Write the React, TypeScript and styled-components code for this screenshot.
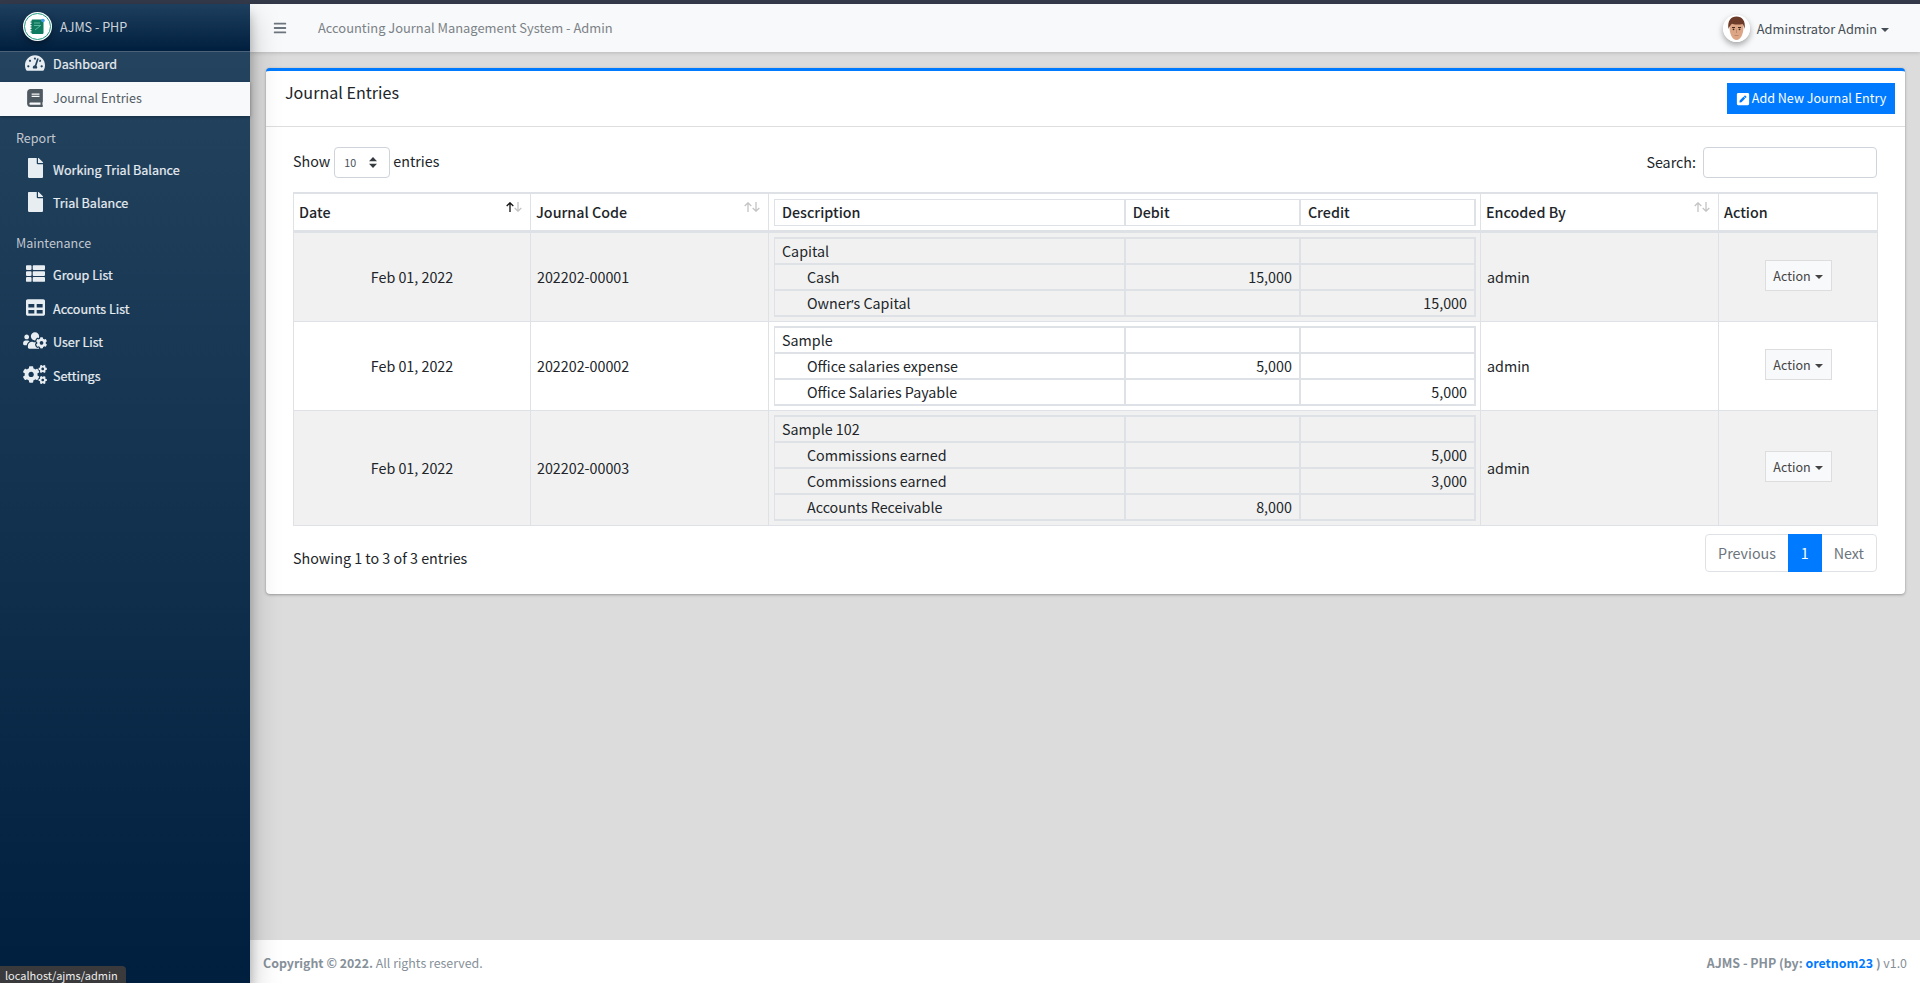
import React from "react";
import styled, { createGlobalStyle } from "styled-components";
import { FaTachometerAlt, FaBook, FaFile, FaThList, FaTable, FaUsersCog, FaCogs, FaBars, FaPenSquare } from "react-icons/fa";

const Global = createGlobalStyle`
  html, body { margin: 0; padding: 0; height: 100%; overflow: hidden; }
  body { font-family: "Noto Sans CJK SC", "Noto Sans", sans-serif; font-size: 14.3px; color: #212529; background: #dcdcdc; }
  * { box-sizing: border-box; }
`;

const Page = styled.div`
  height: 983px; display: flex; flex-direction: column; position: relative; background: #dcdcdc;
`;
const TopStrip = styled.div`height: 4px; background: #343a4a; flex: none;`;
const Body = styled.div`flex: 1; display: flex; min-height: 0;`;

const Sidebar = styled.aside`
  width: 250px; flex: none; display: flex; flex-direction: column; position: relative; z-index: 3;
  background: linear-gradient(180deg, #254560 0%, #001f3f 100%);
  box-shadow: 0 14px 28px rgba(0,0,0,.25), 0 10px 10px rgba(0,0,0,.22);
`;
const Brand = styled.div`
  height: 48px; display: flex; align-items: center; gap: 8px; padding: 0 0 2px 23px;
  background: linear-gradient(180deg, #1f3f5e 0%, #001f3f 100%);
  border-bottom: 1px solid #4b6278; color: rgba(255,255,255,.8); font-size: 12.6px;
`;
const LogoWrap = styled.div`
  width: 29px; height: 29px; border-radius: 50%; flex: none;
  box-shadow: 0 3px 6px rgba(0,0,0,.35);
  svg { display: block; }
`;
const Nav = styled.nav`display: flex; flex-direction: column;`;
const NavItem = styled.div<{ $active?: boolean; $h?: number; $pb?: number }>`
  height: ${p => p.$h ?? 33.5}px; display: flex; align-items: center; padding: 0 0 ${p => p.$pb ?? 0}px 20px; font-size: 12.55px;
  color: ${p => (p.$active ? "#4f5962" : "#e8edf2")};
  background: ${p => (p.$active ? "#f8f9fa" : "transparent")};
  box-shadow: ${p => (p.$active ? "0 1px 3px rgba(0,0,0,.3)" : "none")};
  -webkit-text-stroke: ${p => (p.$active ? "0" : ".2px")};
`;
const NavIcon = styled.span<{ $w: number; $h: number; $up?: number }>`
  width: 30px; margin-right: 3px; display: flex; justify-content: center; flex: none;
  position: relative; top: ${p => -(p.$up ?? 0)}px;
  -webkit-text-stroke: 0;
  svg { width: ${p => p.$w}px; height: ${p => p.$h}px; display: block; }
`;
const NavHeader = styled.div<{ $h: number; $top: number }>`
  height: ${p => p.$h}px; padding: ${p => p.$top}px 0 0 16px; display: flex; align-items: center;
  font-size: 12.55px; color: #c2c7d0;
`;

const Main = styled.div`flex: 1; min-width: 0; display: flex; flex-direction: column;`;
const Navbar = styled.header`
  height: 48px; flex: none; background: #f8f9fa; display: flex; align-items: center;
  padding: 0 31px 0 23px; box-shadow: 0 1px 4px rgba(0,0,0,.16); position: relative; z-index: 2;
`;
const Burger = styled.span`
  color: #6c757d; display: flex; width: 14px; margin-right: 31px;
  svg { width: 14px; height: 14px; display: block; }
`;
const NavTitle = styled.span`font-size: 12.9px; color: #7b8288; flex: 1; padding-bottom: 2px;`;
const UserBox = styled.div`display: flex; align-items: center; gap: 7px; font-size: 12.8px; color: #454d55;`;
const Avatar = styled.div`
  width: 27px; height: 27px; border-radius: 50%; overflow: hidden; background: #fff;
  box-shadow: 0 3px 6px rgba(0,0,0,.35); position: relative;
  svg { display: block; }
`;
const Caret = styled.i`
  display: inline-block; width: 0; height: 0; margin-left: 4px; vertical-align: 2px;
  border-top: 4.5px solid currentColor; border-left: 4.5px solid transparent; border-right: 4.5px solid transparent;
`;

const Content = styled.main`flex: 1; padding: 16px 15px 0 12px; min-height: 0; margin-left: 4px;`;
const Card = styled.section`
  background: #fff; border-top: 3px solid #007bff; border-radius: 4px;
  box-shadow: 0 0 1px rgba(0,0,0,.125), 0 1px 3px rgba(0,0,0,.3);
`;
const CardHead = styled.div`
  height: 56px; display: flex; justify-content: space-between; align-items: flex-start;
  padding: 0 10px 0 19px; border-bottom: 1px solid #dedede;
`;
const CardTitle = styled.h3`margin: 8px 0 0; font-size: 16.1px; font-weight: 400; line-height: 27px; color: #212529;`;
const AddBtn = styled.button`
  width: 168px; height: 31px; margin: 12px 0 0; background: #007bff; color: #fff; border: 0; border-radius: 0;
  font: inherit; font-size: 12.55px; display: flex; align-items: center; justify-content: center; gap: 2px; padding: 0 0 2px;
  svg { width: 14px; height: 14px; display: block; position: relative; top: 1px; }
`;
const CardBody = styled.div`padding: 20px 28px 22px 27px;`;
const Controls = styled.div`display: flex; justify-content: space-between; align-items: center; height: 31px; margin-bottom: 14px;`;
const ShowBox = styled.label`display: flex; align-items: center; gap: 3px; position: relative; top: -2px;`;
const FakeSelect = styled.span`
  width: 56px; height: 31px; margin-left: 1px; border: 1px solid #ced4da; border-radius: 4px; display: flex; align-items: center;
  justify-content: space-between; padding: 0 12px 0 9px; font-size: 10.7px; color: #495057; background: #fff; position: relative; top: 2px;
`;
const SearchBox = styled.label`display: flex; align-items: center; gap: 7px;`;
const SearchLabel = styled.span`position: relative; top: -1px;`;
const SearchInput = styled.input`
  width: 174px; height: 31px; border: 1px solid #ced4da; border-radius: 4px; background: #fff; padding: 0 8px; outline: none;
`;

const Table = styled.table`
  width: 100%; table-layout: fixed; border-collapse: collapse;
  border: 1px solid #dee2e6;
`;
const Col = styled.col<{ $w: number }>`width: ${p => p.$w}px;`;
const Thead = styled.thead`border-top: 2px solid #dee2e6;`;
const Th = styled.th`
  padding: 0 5px 2px; text-align: left; font-weight: 500; position: relative;
  border-left: 1px solid #dee2e6; border-right: 1px solid #dee2e6; border-bottom: 3px solid #dee2e6;
`;
const ThBox = styled.th`
  padding: 5px 4px 4px 5px; border-left: 1px solid #dee2e6; border-right: 1px solid #dee2e6; border-bottom: 3px solid #dee2e6;
  text-align: left;
`;
const SortGlyphs = styled.span`
  position: absolute; right: 8px; top: 8px; display: flex;
  svg { display: block; }
`;
const Tr = styled.tr<{ $alt?: boolean }>`background: ${p => (p.$alt ? "#f1f1f1" : "#fff")};`;
const Td = styled.td<{ $center?: boolean; $h?: number }>`
  ${p => (p.$h ? `height: ${p.$h}px;` : "")}
  padding: 0 6px 1px; border: 1px solid #dee2e6; vertical-align: middle; text-align: ${p => (p.$center ? "center" : "left")};
`;
const DescTd = styled.td<{ $h: number }>`
  height: ${p => p.$h}px; padding: 4px 4px 4px 5px; border: 1px solid #dee2e6; vertical-align: top;
`;
const Inner = styled.table`
  width: 100%; table-layout: fixed; border-collapse: collapse;
`;
const InnerHeadCell = styled.td`
  height: 26px; padding: 0 7px; border: 1px solid #dee2e6; border-width: 1px 2px 1px 1px; font-weight: 500; line-height: 1;
`;
const InnerCell = styled.td<{ $indent?: boolean; $right?: boolean }>`
  height: 26px; padding: 0 7px 0 ${p => (p.$indent ? 32 : 7)}px; border: 1px solid #dee2e6; border-width: 2px 2px 2px 1px;
  text-align: ${p => (p.$right ? "right" : "left")}; line-height: 1;
`;
const Apos = styled.span`font-family: "Noto Sans", sans-serif; font-size: 13px;`;
const ActionBtn = styled.button`
  width: 67px; height: 31px; background: #f8f9fa; border: 1px solid #ddd; color: #444; font: inherit; font-size: 12.55px; padding: 0;
  position: relative; top: -1px;
`;
const Foot = styled.div`display: flex; justify-content: space-between; align-items: flex-start; margin-top: 8px;`;
const Info = styled.div`padding-top: 12px; line-height: 24px;`;
const Pager = styled.div`
  display: flex; height: 38px; border: 1px solid #dee2e6; border-radius: 4px; overflow: visible; width: 172px;
`;
const PageLink = styled.span<{ $active?: boolean; $w: number }>`
  width: ${p => p.$w}px; margin: -1px 0; padding-bottom: 2px; display: flex; align-items: center; justify-content: center;
  color: ${p => (p.$active ? "#fff" : "#6c757d")}; background: ${p => (p.$active ? "#007bff" : "transparent")};
`;

const Footer = styled.footer`
  height: 43px; flex: none; background: #fff; display: flex; justify-content: space-between; align-items: center;
  padding: 2px 13px 0 13px; font-size: 12.4px; color: #869099;
`;
const FootBold = styled.b`font-weight: 700;`;
const FootLink = styled.b`color: #007bff; font-weight: 700;`;
const StatusTip = styled.div`
  position: absolute; left: 0; bottom: 0; height: 17px; width: 126px; background: #3a3a3c; color: #eee; font-size: 11px;
  line-height: 19px; padding-left: 5px; border-top-right-radius: 4px; z-index: 5; white-space: nowrap;
`;

const Logo = () => (
  <svg width="29" height="29" viewBox="0 0 29 29">
    <circle cx="14.5" cy="14.5" r="14.5" fill="#fff" />
    <circle cx="14.5" cy="14.5" r="13" fill="none" stroke="#1f9b82" strokeWidth="1" />
    <rect x="8.5" y="7.5" width="12" height="14.5" rx="1.2" fill="#0f7a60" />
    <path d="M7.5 10h2M7.5 12.5h2M7.5 15h2M7.5 17.5h2M7.5 20h2" stroke="#0f7a60" strokeWidth="1" />
    <path d="M11 11h6M11 13.5h7M12 18l5-4" stroke="#6fc7ac" strokeWidth=".8" />
    <circle cx="20" cy="8.5" r="1.8" fill="#3f9bea" />
  </svg>
);

const Face = () => (
  <svg width="27" height="27" viewBox="0 0 27 27">
    <rect width="27" height="27" fill="#fff" />
    <path d="M6.500 12c0 7 3 13 7 13s7-6 7-13V8h-14z" fill="#dca585" />
    <path d="M5.500 14C4 6 8 1.500 13.500 1.500S23 6 21.500 14c-.4-2.500-1-4-2-5-3 .8-7 .8-10.500-.3C7.500 10 6 12 5.500 14z" fill="#6b3a28" />
    <path d="M9 12.500h3M15 12.500h3" stroke="#4a2a1c" strokeWidth="1" />
    <circle cx="10.500" cy="14.300" r=".9" fill="#3b2a22" />
    <circle cx="16.500" cy="14.300" r=".9" fill="#3b2a22" />
    <path d="M13.500 14.500v3.500M11.500 20.500h4" stroke="#b57f63" strokeWidth=".8" fill="none" />
  </svg>
);

const SelectArrows = () => (
  <svg width="8" height="11" viewBox="0 0 8 11"><path d="M4 0 8 4.200H0zM4 11 0 6.800h8z" fill="#343a40" /></svg>
);

const Sort = ({ on }: { on?: boolean }) => (
  <SortGlyphs>
    <svg width="8" height="10" viewBox="0 0 8 10" fill="none" stroke={on ? "#111" : "#c4c4c4"} strokeWidth="1.3">
      <path d="M4 10V1M.7 4 4 .8 7.300 4" />
    </svg>
    <svg width="8" height="10" viewBox="0 0 8 10" fill="none" stroke="#c4c4c4" strokeWidth="1.3">
      <path d="M4 0v9M.7 6 4 9.200 7.300 6" />
    </svg>
  </SortGlyphs>
);

type Line = { name: React.ReactNode; indent?: boolean; debit?: string; credit?: string };
type Entry = { code: string; lines: Line[] };
const entries: Entry[] = [
  { code: "202202-00001", lines: [
    { name: "Capital" },
    { name: "Cash", indent: true, debit: "15,000" },
    { name: <>Owner<Apos>’</Apos>s Capital</>, indent: true, credit: "15,000" },
  ] },
  { code: "202202-00002", lines: [
    { name: "Sample" },
    { name: "Office salaries expense", indent: true, debit: "5,000" },
    { name: "Office Salaries Payable", indent: true, credit: "5,000" },
  ] },
  { code: "202202-00003", lines: [
    { name: "Sample 102" },
    { name: "Commissions earned", indent: true, credit: "5,000" },
    { name: "Commissions earned", indent: true, credit: "3,000" },
    { name: "Accounts Receivable", indent: true, debit: "8,000" },
  ] },
];

const InnerCols = () => (
  <colgroup>
    <Col $w={350} />
    <Col $w={175} />
    <Col $w={175} />
  </colgroup>
);

export default function App() {
  return (
    <Page>
      <Global />
      <TopStrip />
      <Body>
        <Sidebar>
          <Brand>
            <LogoWrap><Logo /></LogoWrap>
            AJMS - PHP
          </Brand>
          <Nav>
            <NavItem $h={30} $pb={8}><NavIcon $w={20} $h={18} $up={0}><FaTachometerAlt /></NavIcon>Dashboard</NavItem>
            <NavItem $active $h={34} $pb={3}><NavIcon $w={16} $h={18} $up={0}><FaBook /></NavIcon>Journal Entries</NavItem>
            <NavHeader $h={37} $top={5}>Report</NavHeader>
            <NavItem><NavIcon $w={15} $h={20} $up={2}><FaFile /></NavIcon>Working Trial Balance</NavItem>
            <NavItem $pb={1}><NavIcon $w={15} $h={20} $up={1}><FaFile /></NavIcon>Trial Balance</NavItem>
            <NavHeader $h={38} $top={6}>Maintenance</NavHeader>
            <NavItem><NavIcon $w={19} $h={19} $up={1}><FaThList /></NavIcon>Group List</NavItem>
            <NavItem><NavIcon $w={19} $h={19} $up={1}><FaTable /></NavIcon>Accounts List</NavItem>
            <NavItem><NavIcon $w={24} $h={19} $up={1}><FaUsersCog /></NavIcon>User List</NavItem>
            <NavItem><NavIcon $w={24} $h={19} $up={1}><FaCogs /></NavIcon>Settings</NavItem>
          </Nav>
        </Sidebar>
        <Main>
          <Navbar>
            <Burger><FaBars /></Burger>
            <NavTitle>Accounting Journal Management System - Admin</NavTitle>
            <UserBox>
              <Avatar><Face /></Avatar>
              <span>Adminstrator Admin<Caret /></span>
            </UserBox>
          </Navbar>
          <Content>
            <Card>
              <CardHead>
                <CardTitle>Journal Entries</CardTitle>
                <AddBtn><FaPenSquare />Add New Journal Entry</AddBtn>
              </CardHead>
              <CardBody>
                <Controls>
                  <ShowBox>Show <FakeSelect>10<SelectArrows /></FakeSelect> entries</ShowBox>
                  <SearchBox><SearchLabel>Search:</SearchLabel><SearchInput /></SearchBox>
                </Controls>
                <Table>
                  <colgroup>
                    <Col $w={237} />
                    <Col $w={238} />
                    <Col $w={712} />
                    <Col $w={238} />
                    <Col $w={159} />
                  </colgroup>
                  <Thead>
                    <tr>
                      <Th>Date<Sort on /></Th>
                      <Th>Journal Code<Sort /></Th>
                      <ThBox>
                        <Inner>
                          <InnerCols />
                          <tbody>
                            <tr>
                              <InnerHeadCell>Description</InnerHeadCell>
                              <InnerHeadCell>Debit</InnerHeadCell>
                              <InnerHeadCell>Credit</InnerHeadCell>
                            </tr>
                          </tbody>
                        </Inner>
                      </ThBox>
                      <Th>Encoded By<Sort /></Th>
                      <Th>Action</Th>
                    </tr>
                  </Thead>
                  <tbody>
                    {entries.map((e, i) => {
                      const h = e.lines.length === 4 ? 115 : 89;
                      return (
                        <Tr key={e.code} $alt={i % 2 === 0}>
                          <Td $center $h={h}>Feb 01, 2022</Td>
                          <Td>{e.code}</Td>
                          <DescTd $h={h}>
                            <Inner>
                              <InnerCols />
                              <tbody>
                                {e.lines.map((l, j) => (
                                  <tr key={j}>
                                    <InnerCell $indent={l.indent}>{l.name}</InnerCell>
                                    <InnerCell $right>{l.debit}</InnerCell>
                                    <InnerCell $right>{l.credit}</InnerCell>
                                  </tr>
                                ))}
                              </tbody>
                            </Inner>
                          </DescTd>
                          <Td>admin</Td>
                          <Td $center><ActionBtn>Action<Caret /></ActionBtn></Td>
                        </Tr>
                      );
                    })}
                  </tbody>
                </Table>
                <Foot>
                  <Info>Showing 1 to 3 of 3 entries</Info>
                  <Pager>
                    <PageLink $w={83}>Previous</PageLink>
                    <PageLink $w={34} $active>1</PageLink>
                    <PageLink $w={55}>Next</PageLink>
                  </Pager>
                </Foot>
              </CardBody>
            </Card>
          </Content>
          <Footer>
            <span><FootBold>Copyright © 2022.</FootBold> All rights reserved.</span>
            <span><FootBold>AJMS - PHP (by: <FootLink>oretnom23</FootLink> )</FootBold> v1.0</span>
          </Footer>
        </Main>
      </Body>
      <StatusTip>localhost/ajms/admin</StatusTip>
    </Page>
  );
}
